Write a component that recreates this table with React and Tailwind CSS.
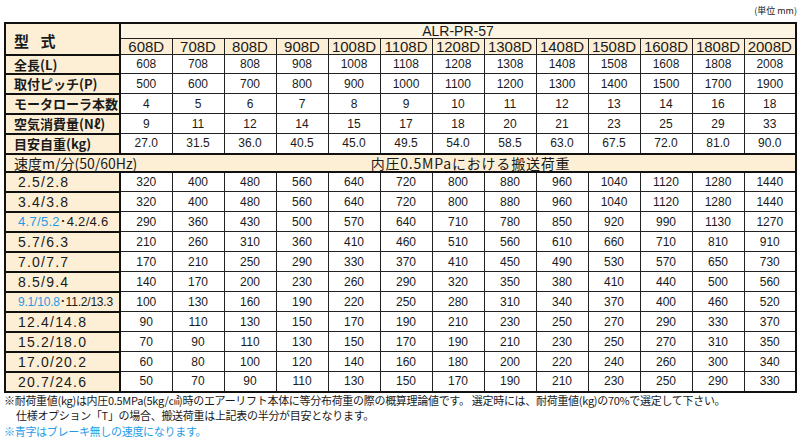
import React from "react";

const models = ["608D", "708D", "808D", "908D", "1008D", "1108D", "1208D", "1308D", "1408D", "1508D", "1608D", "1808D", "2008D"];

// Spec rows (label column + 13 values)
const specs = [
  { label: "全長(L)", values: ["608", "708", "808", "908", "1008", "1108", "1208", "1308", "1408", "1508", "1608", "1808", "2008"] },
  { label: "取付ピッチ(P)", values: ["500", "600", "700", "800", "900", "1000", "1100", "1200", "1300", "1400", "1500", "1700", "1900"] },
  { label: "モータローラ本数", values: ["4", "5", "6", "7", "8", "9", "10", "11", "12", "13", "14", "16", "18"] },
  { label: "空気消費量(Nℓ)", values: ["9", "11", "12", "14", "15", "17", "18", "20", "21", "23", "25", "29", "33"] },
  { label: "目安自重(kg)", values: ["27.0", "31.5", "36.0", "40.5", "45.0", "49.5", "54.0", "58.5", "63.0", "67.5", "72.0", "81.0", "90.0"] },
];

// Load rows by speed; blue = speed without brake
const loads = [
  { speed: "2.5/2.8", values: [320, 400, 480, 560, 640, 720, 800, 880, 960, 1040, 1120, 1280, 1440] },
  { speed: "3.4/3.8", values: [320, 400, 480, 560, 640, 720, 800, 880, 960, 1040, 1120, 1280, 1440] },
  { blue: "4.7/5.2", speed: "･4.2/4.6", values: [290, 360, 430, 500, 570, 640, 710, 780, 850, 920, 990, 1130, 1270] },
  { speed: "5.7/6.3", values: [210, 260, 310, 360, 410, 460, 510, 560, 610, 660, 710, 810, 910] },
  { speed: "7.0/7.7", values: [170, 210, 250, 290, 330, 370, 410, 450, 490, 530, 570, 650, 730] },
  { speed: "8.5/9.4", values: [140, 170, 200, 230, 260, 290, 320, 350, 380, 410, 440, 500, 560] },
  { blue: "9.1/10.8", speed: "･11.2/13.3", small: true, values: [100, 130, 160, 190, 220, 250, 280, 310, 340, 370, 400, 460, 520] },
  { speed: "12.4/14.8", values: [90, 110, 130, 150, 170, 190, 210, 230, 250, 270, 290, 330, 370] },
  { speed: "15.2/18.0", values: [70, 90, 110, 130, 150, 170, 190, 210, 230, 250, 270, 310, 350] },
  { speed: "17.0/20.2", values: [60, 80, 100, 120, 140, 160, 180, 200, 220, 240, 260, 300, 340] },
  { speed: "20.7/24.6", values: [50, 70, 90, 110, 130, 150, 170, 190, 210, 230, 250, 290, 330] },
];

const jp = "font-['Noto_Sans_CJK_JP',sans-serif]";
const num = "font-['Liberation_Sans','Noto_Sans_CJK_JP',sans-serif]";

const App = () => {
  return (
    <div className="w-[800px] h-[445px] bg-white text-[#1a1a1a] overflow-hidden">
      {/* unit note */}
      <div className={`h-[22px] flex justify-end items-start pt-[6px] pr-[3px] text-[9px] leading-none ${jp}`}>(単位 mm)</div>

      {/* main table */}
      <table className="ml-[4px] w-[793px] table-fixed border-collapse border-2 border-[#111]">
        <colgroup>
          <col className="w-[115px]" />
          {models.map((m) => (
            <col key={m} />
          ))}
        </colgroup>
        <tbody>
          <tr className="h-[14px]">
            <td rowSpan={2} className={`bg-[#fcefd6] border-r-2 border-b border-[#111] pl-[8px] pt-[3px] text-[15px] font-bold tracking-[4px] leading-none ${jp}`}>
              型 式
            </td>
            <td colSpan={13} className={`bg-[#fdf5e4] border-b border-[#222] text-center text-[14px] leading-none ${num}`}>ALR-PR-57</td>
          </tr>
          <tr className="h-[15px]">
            {models.map((m) => (
              <td key={m} className={`bg-[#fcefd6] border-l border-[#222] text-center text-[15px] leading-none ${num}`}>
                {m}
              </td>
            ))}
          </tr>

          {specs.map((row, i) => (
            <tr key={row.label} className={i === 0 ? "h-[19px]" : "h-[20px]"}>
              <td className={`bg-[#fcefd6] border-t-2 border-r-2 border-[#111] pl-[8px] text-[13px] font-bold leading-none whitespace-nowrap ${jp}`}>{row.label}</td>
              {row.values.map((v, j) => (
                <td key={j} className={`border border-[#222] text-center text-[12px] leading-none ${num}`}>
                  {v}
                </td>
              ))}
            </tr>
          ))}

          {/* section header */}
          <tr className="h-[18px]">
            <td colSpan={14} className="bg-[#fcefd6] border-t-2 border-b-2 border-[#111] p-0">
              <div className={`flex items-center text-[14px] leading-none ${jp}`}>
                <span className="pl-[8px] w-[140px] whitespace-nowrap">速度m/分(50/60Hz)</span>
                <span className="flex-1 text-center tracking-[0.8px]">内圧0.5MPaにおける搬送荷重</span>
              </div>
            </td>
          </tr>

          {loads.map((row) => (
            <tr key={row.speed} className="h-[20px]">
              <td
                className={`bg-[#fcefd6] border-t-2 border-r-2 border-[#111] pl-[12px] leading-none whitespace-nowrap ${num} ${
                  row.small ? "text-[12px] tracking-[-0.2px] pl-[11px]" : row.blue ? "text-[13px] tracking-[0.3px]" : "text-[14px] tracking-[1.2px]"
                }`}
              >
                {row.blue && <span className="text-[#1e9ce6]">{row.blue}</span>}
                {row.speed}
              </td>
              {row.values.map((v, j) => (
                <td key={j} className={`border border-[#222] text-center text-[12px] leading-none ${num}`}>
                  {v}
                </td>
              ))}
            </tr>
          ))}
        </tbody>
      </table>

      {/* footnotes */}
      <div className={`pl-[4px] text-[11px] leading-[15.5px] tracking-[-0.3px] ${jp}`}>
        <p>※耐荷重値(kg)は内圧0.5MPa(5kg/㎠)時のエアーリフト本体に等分布荷重の際の概算理論値です。 選定時には、耐荷重値(kg)の70%で選定して下さい。</p>
        <p className="pl-[12px]">仕様オプション「T」の場合、搬送荷重は上記表の半分が目安となります。</p>
        <p className="text-[#1e9ce6]">※青字はブレーキ無しの速度になります。</p>
      </div>
    </div>
  );
};

export default App;
